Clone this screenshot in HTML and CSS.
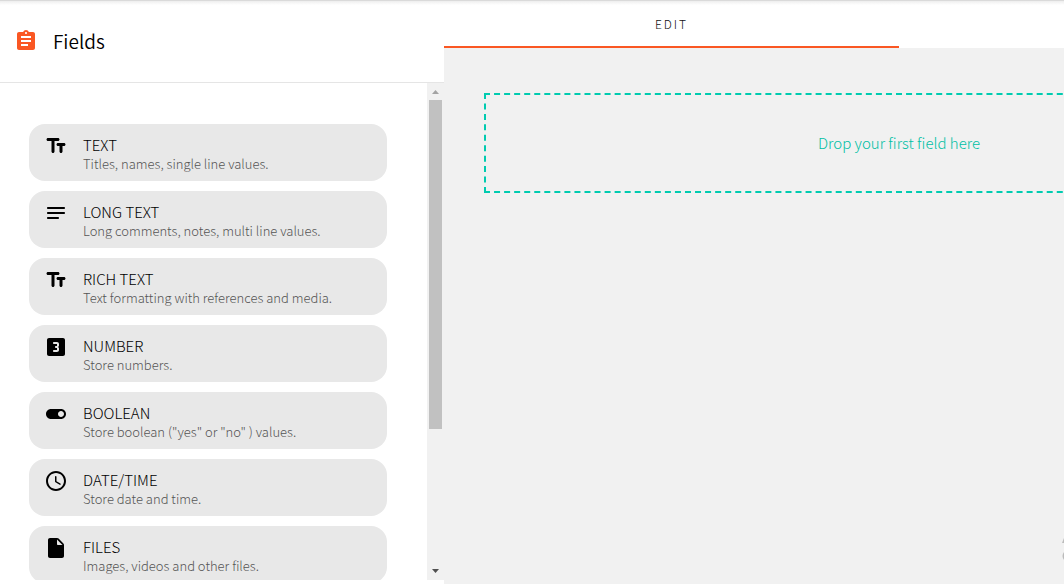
FILE: index.html
```html
<!DOCTYPE html>
<html lang="en">
<head>
    <meta charset="UTF-8">
    <meta name="viewport" content="width=device-width, initial-scale=1.0">
    <title>Fields</title>
    <link rel="stylesheet" href="styles.css">
</head>
<body>
    <div class="app">
        <aside class="sidebar">
            <header class="sidebar-header">
                <svg class="icon icon-accent" viewBox="0 0 24 24"><path d="M19 3h-4.180C14.400 1.840 13.300 1 12 1s-2.400.84-2.820 2H5c-1.100 0-2 .9-2 2v14c0 1.100.9 2 2 2h14c1.100 0 2-.9 2-2V5c0-1.100-.9-2-2-2zm-7 0c.55 0 1 .45 1 1s-.45 1-1 1-1-.45-1-1 .45-1 1-1zm2 14H7v-2h7v2zm3-4H7v-2h10v2zm0-4H7V7h10v2z"/></svg>
                <h1>Fields</h1>
            </header>
            <div class="sidebar-body">
                <ul class="field-list">
                    <li class="field">
                        <svg class="icon" viewBox="0 0 24 24"><path d="M2.500 5.500C2.500 6.330 3.170 7 4 7h3.500v10.500c0 .83.67 1.500 1.500 1.500s1.500-.67 1.500-1.500V7H14c.83 0 1.500-.67 1.500-1.500S14.830 4 14 4H4c-.83 0-1.500.67-1.500 1.500zM20 9h-6c-.83 0-1.500.67-1.500 1.500S13.170 12 14 12h1.500v5.500c0 .83.67 1.500 1.500 1.500s1.500-.67 1.500-1.500V12H20c.83 0 1.500-.67 1.500-1.500S20.830 9 20 9z"/></svg>
                        <div class="field-info">
                            <h2>TEXT</h2>
                            <p>Titles, names, single line values.</p>
                        </div>
                    </li>
                    <li class="field">
                        <svg class="icon" viewBox="0 0 24 24"><path d="M4 6h16c.55 0 1 .45 1 1s-.45 1-1 1H4c-.55 0-1-.45-1-1s.45-1 1-1zm0 5h16c.55 0 1 .45 1 1s-.45 1-1 1H4c-.55 0-1-.45-1-1s.45-1 1-1zm0 5h10c.55 0 1 .45 1 1s-.45 1-1 1H4c-.55 0-1-.45-1-1s.45-1 1-1z"/></svg>
                        <div class="field-info">
                            <h2>LONG TEXT</h2>
                            <p>Long comments, notes, multi line values.</p>
                        </div>
                    </li>
                    <li class="field">
                        <svg class="icon" viewBox="0 0 24 24"><path d="M2.500 5.500C2.500 6.330 3.170 7 4 7h3.500v10.500c0 .83.67 1.500 1.500 1.500s1.500-.67 1.500-1.500V7H14c.83 0 1.500-.67 1.500-1.500S14.830 4 14 4H4c-.83 0-1.500.67-1.500 1.500zM20 9h-6c-.83 0-1.500.67-1.500 1.500S13.170 12 14 12h1.500v5.500c0 .83.67 1.500 1.500 1.500s1.500-.67 1.500-1.500V12H20c.83 0 1.500-.67 1.500-1.500S20.830 9 20 9z"/></svg>
                        <div class="field-info">
                            <h2>RICH TEXT</h2>
                            <p>Text formatting with references and media.</p>
                        </div>
                    </li>
                    <li class="field">
                        <svg class="icon" viewBox="0 0 24 24"><path d="M19 3H5c-1.100 0-2 .9-2 2v14c0 1.100.9 2 2 2h14c1.100 0 2-.9 2-2V5c0-1.100-.9-2-2-2zm-4 7.500c0 .83-.67 1.500-1.500 1.500.83 0 1.500.67 1.500 1.500V15c0 1.110-.9 2-2 2h-3c-.55 0-1-.45-1-1s.45-1 1-1h3v-2h-1c-.55 0-1-.45-1-1s.45-1 1-1h1V9h-3c-.55 0-1-.45-1-1s.45-1 1-1h3c1.100 0 2 .89 2 2v1.500z"/></svg>
                        <div class="field-info">
                            <h2>NUMBER</h2>
                            <p>Store numbers.</p>
                        </div>
                    </li>
                    <li class="field">
                        <svg class="icon" viewBox="0 0 24 24"><path d="M17 7H7c-2.760 0-5 2.240-5 5s2.240 5 5 5h10c2.760 0 5-2.240 5-5s-2.240-5-5-5zm0 8c-1.660 0-3-1.340-3-3s1.340-3 3-3 3 1.340 3 3-1.340 3-3 3z"/></svg>
                        <div class="field-info">
                            <h2>BOOLEAN</h2>
                            <p>Store boolean ("yes" or "no" ) values.</p>
                        </div>
                    </li>
                    <li class="field">
                        <svg class="icon" viewBox="0 0 24 24"><path d="M12 2C6.480 2 2 6.480 2 12s4.480 10 10 10 10-4.480 10-10S17.520 2 12 2zm0 18c-4.420 0-8-3.580-8-8s3.580-8 8-8 8 3.580 8 8-3.580 8-8 8zm-.22-13h-.06c-.4 0-.72.32-.72.72v4.720c0 .35.18.68.49.86l4.150 2.490c.34.2.78.1.98-.24.21-.34.1-.79-.25-.99l-3.870-2.300V7.720c0-.4-.32-.72-.72-.72z"/></svg>
                        <div class="field-info">
                            <h2>DATE/TIME</h2>
                            <p>Store date and time.</p>
                        </div>
                    </li>
                    <li class="field">
                        <svg class="icon" viewBox="0 0 24 24"><path d="M6 2c-1.100 0-2 .9-2 2v16c0 1.100.89 2 1.990 2H18c1.100 0 2-.9 2-2V8.830c0-.53-.21-1.040-.59-1.410l-4.830-4.830c-.37-.38-.88-.59-1.410-.59H6zm7 6V3.500L18.500 9H14c-.55 0-1-.45-1-1z"/></svg>
                        <div class="field-info">
                            <h2>FILES</h2>
                            <p>Images, videos and other files.</p>
                        </div>
                    </li>
                </ul>
                <div class="scrollbar">
                    <svg class="arrow arrow-up" viewBox="0 0 7 4"><path d="M0 4L3.500 0L7 4z"/></svg>
                    <div class="track"><div class="thumb"></div></div>
                    <svg class="arrow" viewBox="0 0 7 4"><path d="M0 0L3.500 4L7 0z"/></svg>
                </div>
            </div>
        </aside>
        <main class="editor">
            <nav class="tabs">
                <button class="tab active">EDIT</button>
            </nav>
            <div class="canvas">
                <div class="drop-zone">Drop your first field here</div>
            </div>
        </main>
        <svg class="corner-mark" viewBox="0 0 2 24"><path d="M2 2v5H0zM2 16v8q-3-4 0-8z"/></svg>
    </div>
</body>
</html>
```
FILE: styles.css
```css
/* styles.css */

* {
    box-sizing: border-box;
}

body {
    margin: 0;
    background-color: #f1f1f1;
    color: #000;
    font-family: "Noto Sans CJK SC", sans-serif;
    font-weight: 300;
}

h1, h2, p, ul {
    margin: 0;
    padding: 0;
    font-weight: 300;
}

.app {
    position: relative;
    display: flex;
    height: 100vh;
    overflow: hidden;
}

/* shadow under the top bar */
.app::before {
    content: "";
    position: absolute;
    top: 0;
    left: 0;
    right: 0;
    height: 4px;
    border-top: 1px solid #dadada;
    background: linear-gradient(#eee, #fff);
}

.icon {
    flex: none;
    width: 24px;
    height: 24px;
    fill: #000;
}

.icon-accent {
    fill: #fa5723;
}

/* sidebar */

.sidebar {
    display: flex;
    flex-direction: column;
    flex: none;
    width: 444px;
    padding-bottom: 4px;
    background-color: #fff;
}

.sidebar-header {
    display: flex;
    align-items: center;
    gap: 15px;
    flex: none;
    height: 83px;
    padding-left: 14px;
    border-bottom: 1px solid #e5e5e5;
}

.sidebar-header h1 {
    font-size: 19px;
    font-weight: 350;
    line-height: 24px;
}

.sidebar-body {
    display: flex;
    flex: 1;
    min-height: 0;
}

.field-list {
    display: flex;
    flex-direction: column;
    gap: 10px;
    flex: 1;
    padding: 41px 40px 0 29px;
    overflow: hidden;
    list-style: none;
}

.field {
    display: flex;
    gap: 15px;
    flex: none;
    height: 57px;
    padding: 10px 15px;
    border-radius: 16px;
    background-color: #e8e8e8;
}

.field-info {
    padding-top: 1px;
}

.field h2 {
    font-size: 15px;
    line-height: 20px;
}

.field p {
    color: #555;
    font-size: 13px;
    line-height: 18px;
}

.scrollbar {
    display: flex;
    flex-direction: column;
    align-items: center;
    flex: none;
    width: 17px;
    padding: 7px 0;
    background-color: #f1f1f1;
}

.arrow {
    flex: none;
    width: 7px;
    height: 4px;
    fill: #505050;
}

.arrow-up {
    fill: #a3a3a3;
}

.track {
    flex: 1;
    width: 13px;
    margin: 6px 0;
}

.thumb {
    height: 71%;
    background-color: #c1c1c1;
}

/* editor */

.editor {
    flex: 1;
    min-width: 910px;
}

.tabs {
    display: flex;
    height: 48px;
    background-color: #fff;
}

.tab {
    width: 50%;
    padding: 0;
    border: 0;
    background: none;
    color: #111;
    font-family: inherit;
    font-size: 12px;
    font-weight: 300;
    letter-spacing: 2px;
}

.tab.active {
    border-bottom: 2px solid #fa5723;
}

.canvas {
    padding: 45px 40px;
}

.drop-zone {
    display: flex;
    align-items: center;
    justify-content: center;
    height: 100px;
    padding-bottom: 2px;
    border: 2px dashed #00cbb0;
    color: #00c0a4;
    font-size: 15px;
}

.corner-mark {
    position: absolute;
    right: 0;
    bottom: 24px;
    width: 2px;
    height: 24px;
    fill: #bbb;
}
```
